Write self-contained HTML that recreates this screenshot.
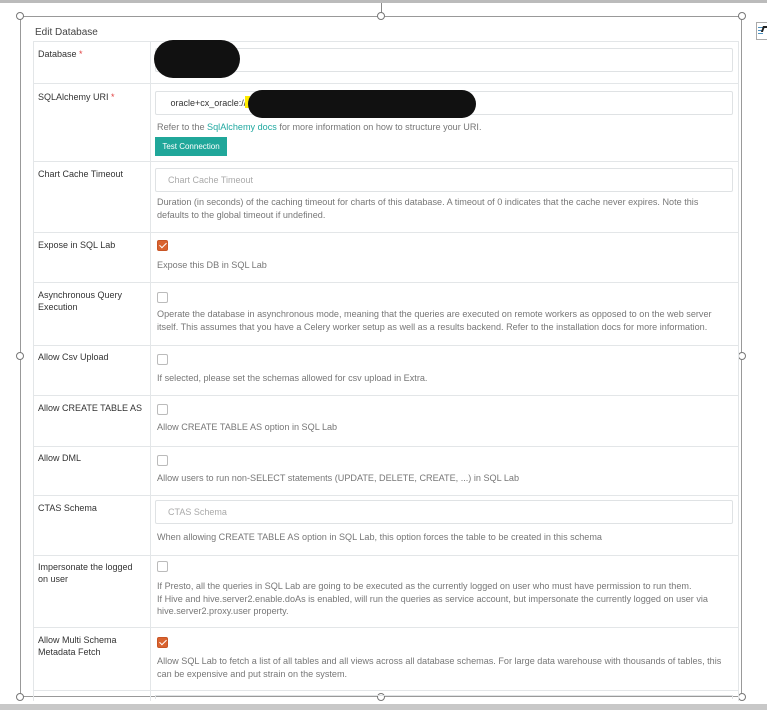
<!DOCTYPE html>
<html><head><meta charset="utf-8">
<style>
*{margin:0;padding:0;box-sizing:border-box}
body{width:767px;height:710px;background:#fff;position:relative;overflow:hidden;font-family:"Liberation Sans",sans-serif;font-size:9px;color:#555}
.a{position:absolute}
.hl{position:absolute;left:33px;width:706px;height:1px;background:#e3e6e8}
.lbl{position:absolute;left:38px;color:#333;line-height:12px;width:104px}
.help{position:absolute;left:157px;color:#777;line-height:12.5px;width:566px;font-size:9.1px}
.inp{position:absolute;left:155px;width:578px;height:24px;border:1px solid #dfe2e4;border-radius:2px;color:#aaa;padding:0 0 0 12px;line-height:22px}
.cb{position:absolute;left:157px;width:11px;height:11px;border:1px solid #bbb;border-radius:2px;background:#fff}
.cb.on{background:#d9632f;border-color:#c85525}
.cb.on:after{content:"";position:absolute;left:3px;top:0px;width:3px;height:6px;border:solid #fff;border-width:0 1.5px 1.5px 0;transform:rotate(45deg)}
.req{color:#e04040}
.h{position:absolute;width:8px;height:8px;border:1px solid #777;border-radius:50%;background:#fff}
</style></head><body>
<div class="a" style="left:0;top:0;width:767px;height:3px;background:#bbb"></div>
<div class="a" style="left:0;top:704px;width:767px;height:6px;background:#c8c8c8"></div>
<div class="a" style="left:381px;top:3px;width:1px;height:13px;background:#888"></div>
<div class="a" style="left:20px;top:16px;width:722px;height:681px;border:1px solid #999"></div>
<div class="h" style="left:16px;top:12px"></div>
<div class="h" style="left:377px;top:12px"></div>
<div class="h" style="left:738px;top:12px"></div>
<div class="h" style="left:16px;top:352px"></div>
<div class="h" style="left:738px;top:352px"></div>
<div class="h" style="left:16px;top:693px"></div>
<div class="h" style="left:377px;top:693px"></div>
<div class="h" style="left:738px;top:693px"></div>
<div class="a" style="left:756px;top:22px;width:12px;height:18px;border:1px solid #aaa;background:#fff">
<div class="a" style="left:1px;top:4px;width:5px;height:1px;background:#4a90c0"></div>
<div class="a" style="left:1px;top:7px;width:5px;height:1px;background:#4a90c0"></div>
<div class="a" style="left:1px;top:10px;width:5px;height:1px;background:#4a90c0"></div>
<div class="a" style="left:5px;top:3px;width:5px;height:6px;border-left:2px solid #222;border-top:2px solid #222;transform:skewX(-20deg)"></div>
</div>
<div class="a" style="left:35px;top:27px;font-size:10px;color:#444">Edit Database</div>
<div class="a" style="left:33px;top:41px;width:706px;height:660px;border-left:1px solid #e3e6e8;border-right:1px solid #e3e6e8"></div>
<div class="a" style="left:150px;top:41px;width:1px;height:660px;background:#e3e6e8"></div>
<div class="hl" style="top:41px"></div><div class="hl" style="top:83px"></div><div class="hl" style="top:161px"></div><div class="hl" style="top:232px"></div><div class="hl" style="top:282px"></div><div class="hl" style="top:345px"></div><div class="hl" style="top:395px"></div><div class="hl" style="top:446px"></div><div class="hl" style="top:495px"></div><div class="hl" style="top:555px"></div><div class="hl" style="top:627px"></div><div class="hl" style="top:690px"></div>
<div class="a" style="left:155px;top:695px;width:578px;height:4px;border:1px solid #dfe2e4;border-bottom:0"></div>

<div class="lbl" style="top:48px">Database <span class="req">*</span></div>
<div class="inp" style="top:48px"></div>
<div class="a" style="left:154px;top:40px;width:86px;height:38px;border-radius:19px;background:#111"></div>

<div class="lbl" style="top:91px">SQLAlchemy URI <span class="req">*</span></div>
<div class="inp" style="top:91px;color:#333">&nbsp;oracle+cx_oracle://</div>
<div class="a" style="left:245px;top:96px;width:5px;height:12px;background:#ffeb00"></div>
<div class="a" style="left:248px;top:90px;width:228px;height:28px;border-radius:14px;background:#111"></div>
<div class="help" style="top:121px">Refer to the <span style="color:#1fa8a0">SqlAlchemy docs</span> for more information on how to structure your URI.</div>
<div class="a" style="left:155px;top:137px;width:72px;height:19px;background:#20a79a;color:#fff;font-size:8px;line-height:19px;text-align:center">Test Connection</div>

<div class="lbl" style="top:168px">Chart Cache Timeout</div>
<div class="inp" style="top:168px">Chart Cache Timeout</div>
<div class="help" style="top:196px">Duration (in seconds) of the caching timeout for charts of this database. A timeout of 0 indicates that the cache never expires. Note this defaults to the global timeout if undefined.</div>

<div class="lbl" style="top:239px">Expose in SQL Lab</div>
<div class="cb on" style="top:240px"></div>
<div class="help" style="top:259px">Expose this DB in SQL Lab</div>

<div class="lbl" style="top:289px">Asynchronous Query Execution</div>
<div class="cb" style="top:292px"></div>
<div class="help" style="top:308px">Operate the database in asynchronous mode, meaning that the queries are executed on remote workers as opposed to on the web server itself. This assumes that you have a Celery worker setup as well as a results backend. Refer to the installation docs for more information.</div>

<div class="lbl" style="top:351px">Allow Csv Upload</div>
<div class="cb" style="top:354px"></div>
<div class="help" style="top:372px">If selected, please set the schemas allowed for csv upload in Extra.</div>

<div class="lbl" style="top:402px;white-space:nowrap">Allow CREATE TABLE AS</div>
<div class="cb" style="top:404px"></div>
<div class="help" style="top:421px">Allow CREATE TABLE AS option in SQL Lab</div>

<div class="lbl" style="top:452px">Allow DML</div>
<div class="cb" style="top:455px"></div>
<div class="help" style="top:472px">Allow users to run non-SELECT statements (UPDATE, DELETE, CREATE, ...) in SQL Lab</div>

<div class="lbl" style="top:502px">CTAS Schema</div>
<div class="inp" style="top:500px">CTAS Schema</div>
<div class="help" style="top:531px">When allowing CREATE TABLE AS option in SQL Lab, this option forces the table to be created in this schema</div>

<div class="lbl" style="top:561px">Impersonate the logged on user</div>
<div class="cb" style="top:561px"></div>
<div class="help" style="top:580px">If Presto, all the queries in SQL Lab are going to be executed as the currently logged on user who must have permission to run them.<br>If Hive and hive.server2.enable.doAs is enabled, will run the queries as service account, but impersonate the currently logged on user via hive.server2.proxy.user property.</div>

<div class="lbl" style="top:634px">Allow Multi Schema Metadata Fetch</div>
<div class="cb on" style="top:637px"></div>
<div class="help" style="top:655px">Allow SQL Lab to fetch a list of all tables and all views across all database schemas. For large data warehouse with thousands of tables, this can be expensive and put strain on the system.</div>
</body></html>
